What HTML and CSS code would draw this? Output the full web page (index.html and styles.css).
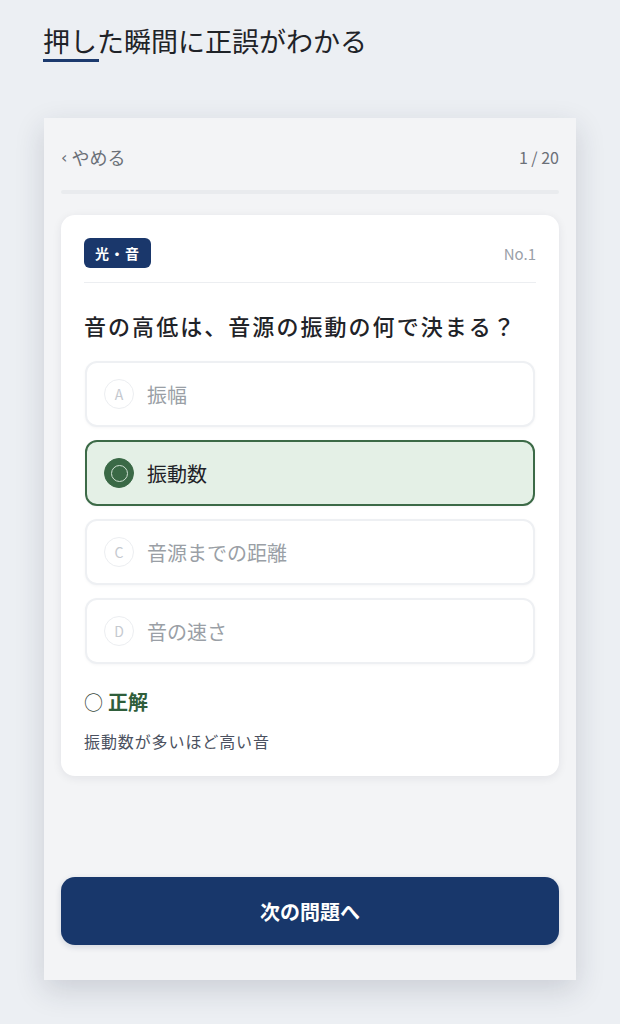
FILE: index.html
```html
<!DOCTYPE html>
<html lang="ja">
<head>
<meta charset="utf-8">
<title>押した瞬間に正誤がわかる</title>
<link rel="stylesheet" href="styles.css">
</head>
<body>
  <header class="page-head">
    <h1 class="page-title">押した瞬間に正誤がわかる</h1>
  </header>
  <main class="phone">
    <div class="topbar">
      <span class="quit"><span class="chev">‹</span>やめる</span>
      <span class="count">1 / 20</span>
    </div>
    <div class="progress"></div>
    <section class="card">
      <div class="card-head">
        <span class="tag">光・音</span>
        <span class="qno">No.1</span>
      </div>
      <h2 class="question">音の高低は、音源の振動の何で決まる？</h2>
      <ul class="options">
        <li class="option"><span class="mark">A</span><span class="opt-text">振幅</span></li>
        <li class="option is-correct"><span class="mark"><span class="ring" aria-label="○"></span></span><span class="opt-text">振動数</span></li>
        <li class="option"><span class="mark">C</span><span class="opt-text">音源までの距離</span></li>
        <li class="option"><span class="mark">D</span><span class="opt-text">音の速さ</span></li>
      </ul>
      <div class="result">
        <p class="verdict"><span class="verdict-mark">○</span>正解</p>
        <p class="explain">振動数が多いほど高い音</p>
      </div>
    </section>
    <button class="next">次の問題へ</button>
  </main>
</body>
</html>
```

FILE: styles.css
```css
* { box-sizing: border-box; }
html, body {
  margin: 0;
  padding: 0;
}
body {
  background: #eceff3;
  font-family: "Noto Sans CJK JP", "Noto Sans", sans-serif;
  color: #1f2328;
  width: 620px;
  height: 1024px;
  overflow: hidden;
}
.page-head {
  padding: 23px 0 0 43px;
  height: 118px;
}
.page-title {
  display: inline-block;
  margin: 0;
  font-size: 27px;
  font-weight: 400;
  line-height: 36px;
  color: #1f2328;
  padding-bottom: 4px;
}
.page-title::after {
  content: "";
  display: block;
  width: 56px;
  height: 3px;
  background: #1c3a6e;
}
.phone {
  margin-left: 44px;
  width: 532px;
  height: 862px;
  background: #f3f4f6;
  box-shadow: 0 10px 28px rgba(30, 40, 60, 0.16);
  padding: 27px 17px 35px;
  display: flex;
  flex-direction: column;
}
.topbar {
  display: flex;
  justify-content: space-between;
  align-items: center;
  height: 24px;
  color: #6b7078;
}
.quit {
  font-size: 18px;
  display: flex;
  align-items: center;
}
.chev {
  font-size: 16px;
  margin-right: 4px;
  font-family: "DejaVu Sans", sans-serif;
}
.count {
  font-size: 16px;
}
.progress {
  margin-top: 21px;
  height: 4px;
  border-radius: 2px;
  background: #e9ebee;
}
.card {
  margin-top: 21px;
  background: #ffffff;
  border-radius: 14px;
  box-shadow: 0 2px 10px rgba(20, 30, 50, 0.08);
  padding: 23px 23px 23px;
}
.card-head {
  display: flex;
  justify-content: space-between;
  align-items: center;
  padding-bottom: 14px;
  border-bottom: 1px solid #eceef1;
}
.tag {
  background: #1a376b;
  color: #ffffff;
  font-weight: 700;
  font-size: 14px;
  line-height: 30px;
  height: 30px;
  padding: 0 11px;
  border-radius: 6px;
  letter-spacing: 1px;
}
.qno {
  font-size: 15px;
  color: #9aa0a8;
}
.question {
  margin: 26px 0 20px;
  font-size: 22px;
  font-weight: 500;
  letter-spacing: 2.05px;
  line-height: 32px;
  color: #1f2328;
}
.options {
  list-style: none;
  margin: 0 1px;
  padding: 0;
  display: flex;
  flex-direction: column;
  gap: 13px;
}
.option {
  height: 66px;
  border: 2px solid #eef0f3;
  border-radius: 12px;
  background: #ffffff;
  display: flex;
  align-items: center;
  padding-left: 17px;
  box-shadow: 0 1px 3px rgba(20, 30, 50, 0.04);
}
.mark {
  width: 30px;
  height: 30px;
  border-radius: 50%;
  border: 1.5px solid #eceef1;
  color: #c5c9cf;
  font-size: 14px;
  display: flex;
  align-items: center;
  justify-content: center;
  margin-right: 13px;
  flex: none;
}
.opt-text {
  font-size: 20px;
  color: #9a9fa6;
}
.option.is-correct {
  border-color: #3c6a47;
  background: #e4f0e6;
}
.option.is-correct .mark {
  background: #3a6946;
  border-color: #3a6946;
}
.ring {
  width: 17px;
  height: 17px;
  border-radius: 50%;
  border: 1.5px solid #cfe0d3;
}
.option.is-correct .opt-text {
  color: #1f2328;
}
.result {
  margin-top: 23px;
}
.verdict {
  margin: 0;
  font-size: 20px;
  font-weight: 700;
  color: #2f5e3b;
  line-height: 30px;
  display: flex;
  align-items: center;
}
.verdict-mark {
  font-weight: 400;
  color: #3a4a40;
  margin-right: 5px;
  font-size: 19px;
}
.explain {
  margin: 12px 0 0;
  font-size: 16px;
  letter-spacing: 0.9px;
  color: #4b5160;
  line-height: 24px;
}
.next {
  margin-top: auto;
  height: 68px;
  border: none;
  border-radius: 14px;
  background: #18376b;
  color: #ffffff;
  font-family: "Noto Sans CJK JP", "Noto Sans", sans-serif;
  font-size: 20px;
  font-weight: 700;
  box-shadow: 0 2px 6px rgba(20, 40, 80, 0.15);
}
```
